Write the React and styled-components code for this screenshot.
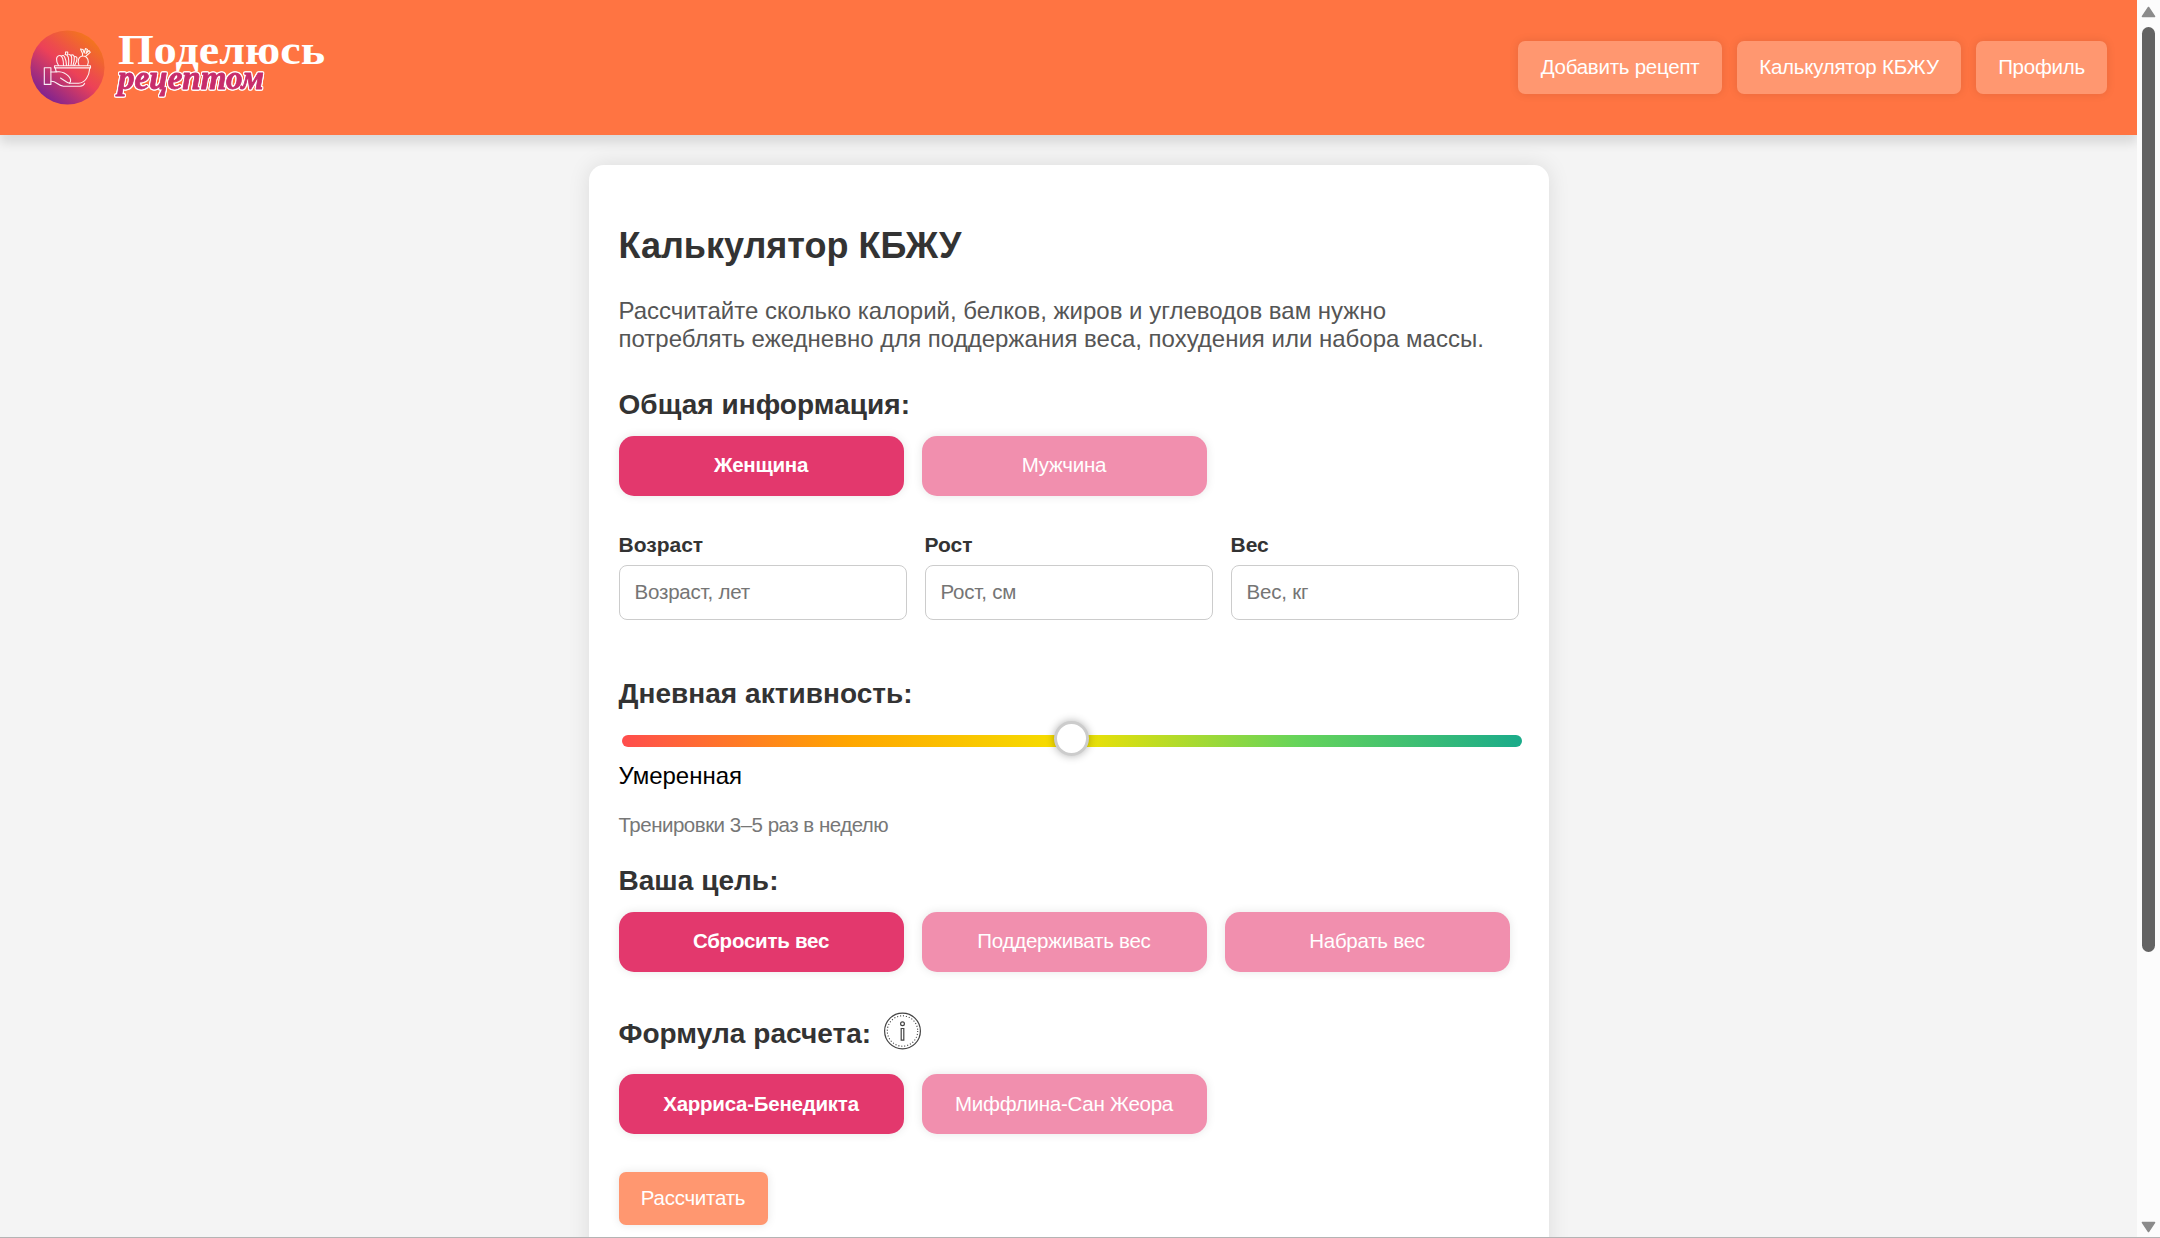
import React from 'react';
import styled, { createGlobalStyle } from 'styled-components';

const GlobalStyle = createGlobalStyle`
  * { box-sizing: border-box; }
  body { margin: 0; overflow: hidden; font-family: "Liberation Sans", Arial, sans-serif; }
  button, input { font-family: inherit; }
`;

const Window = styled.div`
  display: flex;
  height: 1238px;
  border-bottom: 1px solid #b4b4b4;
`;

const Page = styled.div`
  flex: 1;
  display: flex;
  flex-direction: column;
  align-items: center;
  overflow: hidden;
  background: #f4f4f4;
`;

const Header = styled.header`
  flex: none;
  width: 100%;
  height: 135px;
  padding: 0 30px;
  display: flex;
  align-items: center;
  justify-content: space-between;
  background: #ff7442;
  box-shadow: 0 8px 10px rgba(0, 0, 0, 0.11);
`;

const Nav = styled.nav`
  display: flex;
  gap: 15px;
`;

const OrangeButton = styled.button`
  width: ${(p) => p.$width}px;
  height: 53px;
  padding: 0 0 2px;
  border: 0;
  border-radius: 7px;
  background: #ff9770;
  color: #fff;
  font-size: 20.5px;
  letter-spacing: -0.25px;
  white-space: nowrap;
  box-shadow: 0 0 10px rgba(0, 0, 0, 0.1);
`;

const Card = styled.main`
  flex: none;
  width: 960px;
  height: 1200px;
  margin-top: 30px;
  padding: 60px 30px;
  border-radius: 15px;
  background: #fff;
  box-shadow: 0 0 22px rgba(0, 0, 0, 0.1);
`;

const Title = styled.h1`
  margin: 0 0 31px;
  color: #333;
  font-size: 36px;
  line-height: 41px;
`;

const Lead = styled.p`
  margin: 0 0 36px;
  color: #555;
  font-size: 24px;
  line-height: 28px;
  white-space: nowrap;
`;

const LeadLine = styled.span`
  display: block;
`;

const Heading = styled.h2`
  margin: 0 0 ${(p) => p.$gap}px;
  color: #333;
  font-size: 28px;
  line-height: 31px;
  letter-spacing: 0.04px;
`;

const Options = styled.div`
  display: flex;
  gap: 18px;
  margin-bottom: ${(p) => p.$after}px;
`;

const Option = styled.button`
  width: 285px;
  height: 60px;
  padding: 0 0 ${(p) => (p.$low ? 0 : 2)}px;
  border: 0;
  border-radius: 15px;
  background: ${(p) => (p.$active ? '#e3386d' : '#f18fae')};
  color: #fff;
  font-size: 20.5px;
  font-weight: ${(p) => (p.$active ? 700 : 400)};
  letter-spacing: -0.25px;
  box-shadow: 0 0 10px rgba(0, 0, 0, 0.1);
`;

const Fields = styled.div`
  display: grid;
  grid-template-columns: repeat(3, 288px);
  gap: 18px;
  margin-bottom: 58px;
`;

const Field = styled.label`
  display: flex;
  flex-direction: column;
  gap: 8px;
  color: #333;
  font-size: 21px;
  font-weight: 700;
  line-height: 24px;
`;

const Input = styled.input`
  width: 100%;
  height: 55px;
  padding: 0 15px 2px;
  border: 1px solid #ccc;
  border-radius: 8px;
  background: #fff;
  font-size: 20.5px;
  letter-spacing: -0.2px;
  &::placeholder { color: #757575; opacity: 1; }
`;

const Track = styled.div`
  display: flex;
  justify-content: center;
  width: 900px;
  height: 12px;
  margin: 0 0 15px 3px;
  border-radius: 6px;
  background: linear-gradient(to right, #ff4d4d, #ffa500, #f5e100, #66d45a, #1aab8a);
`;

const Thumb = styled.div`
  flex: none;
  width: 35px;
  height: 35px;
  margin: -14px 1px 0 0;
  border: 3px solid #ccc;
  border-radius: 50%;
  background: #fff;
  box-shadow: 0 0 8px rgba(0, 0, 0, 0.3);
`;

const Level = styled.p`
  margin: 0 0 23px;
  color: #000;
  font-size: 24px;
  line-height: 28px;
`;

const Hint = styled.p`
  margin: 0 0 28px;
  color: #777;
  font-size: 20.5px;
  line-height: 24px;
  letter-spacing: -0.5px;
`;

const HeadingRow = styled.div`
  display: flex;
  align-items: center;
  gap: 12px;
  height: 38px;
  padding-top: 4px;
  margin-bottom: 24px;
`;

const InfoSvg = styled.svg`
  width: 38px;
  height: 38px;
  margin-bottom: 4px;
`;

const LogoSvg = styled.svg`
  width: 310px;
  height: 105px;
`;

const ScriptText = styled.text`
  font: italic 700 34px "Liberation Serif", serif;
  fill: #c72c6b;
  stroke: #c72c6b;
  stroke-width: 0.8px;
  stroke-linejoin: round;
  filter: drop-shadow(1px 0 0 #fff) drop-shadow(-1px 0 0 #fff) drop-shadow(0 1px 0 #fff) drop-shadow(0 -1px 0 #fff);
`;

const Scrollbar = styled.aside`
  flex: none;
  width: 23px;
  display: flex;
  flex-direction: column;
  align-items: center;
  padding: 6px 0 4px;
  background: #fcfcfc;
`;

const ScrollThumb = styled.div`
  width: 13px;
  height: 925px;
  margin: 9px 0 auto;
  border-radius: 7px;
  background: #636363;
`;

const ArrowSvg = styled.svg`
  width: 15px;
  height: 12px;
  transform: ${(p) => (p.$down ? 'rotate(180deg)' : 'none')};
`;

function Arrow({ down }) {
  return (
    <ArrowSvg viewBox="0 0 15 12" $down={down}>
      <path d="M7.5 1.5 L13.5 10.5 H1.5 Z" fill="#8b8b8b" stroke="#8b8b8b" strokeWidth="1.6" strokeLinejoin="round" />
    </ArrowSvg>
  );
}

function Logo() {
  return (
    <LogoSvg viewBox="30 15 310 105">
      <defs>
        <linearGradient id="disc" x1="0.18" y1="0.9" x2="0.82" y2="0.1">
          <stop offset="0" stopColor="#7f2390" />
          <stop offset="0.5" stopColor="#ec4158" />
          <stop offset="0.62" stopColor="#ed4c4c" />
          <stop offset="1" stopColor="#f3761d" />
        </linearGradient>
      </defs>
      <circle cx="67.5" cy="67.5" r="37" fill="url(#disc)" />
      <g fill="none" stroke="#fff" strokeWidth="1.1" strokeLinejoin="round" strokeLinecap="round" opacity="0.92">
        <path d="M44.3 67.8h6.6v16.6h-6.6z" />
        <path d="M54.5 65.7h36v2.2h-36z" />
        <path d="M51 72c3 .3 5-.4 8-.3 5 .2 7 1.800 9.500 4.500s2.800 5 1 7c-3-.5-5.500-3.200-9-5.200M51 81.300c5-.5 6.500 4 12.500 5h16.500c3-.4 4-1.200 4.600-3" />
        <path d="M55.500 68c0 1.300.3 2.500.8 3.700M89.800 68c-.6 8-4.500 14.800-11.300 15.300h-9" />
        <path d="M58.500 65.500c-3-5-2.500-9.500 1-10 3-.5 4 5 4 10M61.500 56c2.500-2 4.500 2 5 9.500M65 54.500c4 0 4 5 3.500 11M69 54.500c3.500 0 3 5 2 11M71.500 55c3.500-1 3.500 4.500 1.500 10.500M75 56.500c2.500 0 3 3-.5 9M65.500 54.500v-2.500h2.200v2.500" />
        <path d="M79 65.500c-2-4-.5-9.500 4-9.500s6.800 5.500 4.500 9.500M82.500 56v-2.500l-2-4.500 2.500.5 1.200 3.500 1.300-4.500 2 1-1.500 4 3-3 1.200 1.800-4.200 3.700" />
      </g>
      <text x="118" y="63.500" textLength="207" lengthAdjust="spacingAndGlyphs" fill="#fff" fontFamily="'Liberation Serif', serif" fontWeight="700" fontSize="43">Поделюсь</text>
      <ScriptText x="118" y="89" textLength="146" lengthAdjust="spacingAndGlyphs">рецептом</ScriptText>
    </LogoSvg>
  );
}

function InfoIcon() {
  return (
    <InfoSvg viewBox="0 0 38 38" fill="none" stroke="#444">
      <circle cx="19.500" cy="19" r="17.900" strokeWidth="1.200" />
      <circle cx="19.500" cy="19" r="15.200" strokeWidth="1.100" strokeDasharray="1.100 1.884" />
      <circle cx="19.500" cy="11.800" r="1.900" strokeWidth="1.200" />
      <path d="M18.200 16.500h2.600v11.700h-2.600z" strokeWidth="1.200" />
    </InfoSvg>
  );
}

export default function App() {
  return (
    <Window>
      <GlobalStyle />
      <Page>
        <Header>
          <Logo />
          <Nav>
            <OrangeButton $width={204}>Добавить рецепт</OrangeButton>
            <OrangeButton $width={224}>Калькулятор КБЖУ</OrangeButton>
            <OrangeButton $width={131}>Профиль</OrangeButton>
          </Nav>
        </Header>
        <Card>
          <Title>Калькулятор КБЖУ</Title>
          <Lead>
            <LeadLine>Рассчитайте сколько калорий, белков, жиров и углеводов вам нужно</LeadLine>
            <LeadLine>потреблять ежедневно для поддержания веса, похудения или набора массы.</LeadLine>
          </Lead>
          <Heading $gap={16}>Общая информация:</Heading>
          <Options $after={37}>
            <Option $active>Женщина</Option>
            <Option>Мужчина</Option>
          </Options>
          <Fields>
            <Field>Возраст<Input placeholder="Возраст, лет" /></Field>
            <Field>Рост<Input placeholder="Рост, см" /></Field>
            <Field>Вес<Input placeholder="Вес, кг" /></Field>
          </Fields>
          <Heading $gap={26}>Дневная активность:</Heading>
          <Track><Thumb /></Track>
          <Level>Умеренная</Level>
          <Hint>Тренировки 3–5 раз в неделю</Hint>
          <Heading $gap={16}>Ваша цель:</Heading>
          <Options $after={40}>
            <Option $active>Сбросить вес</Option>
            <Option>Поддерживать вес</Option>
            <Option>Набрать вес</Option>
          </Options>
          <HeadingRow>
            <Heading $gap={0}>Формула расчета:</Heading>
            <InfoIcon />
          </HeadingRow>
          <Options $after={38}>
            <Option $active $low>Харриса-Бенедикта</Option>
            <Option $low>Миффлина-Сан Жеора</Option>
          </Options>
          <OrangeButton $width={149}>Рассчитать</OrangeButton>
        </Card>
      </Page>
      <Scrollbar>
        <Arrow />
        <ScrollThumb />
        <Arrow down />
      </Scrollbar>
    </Window>
  );
}
